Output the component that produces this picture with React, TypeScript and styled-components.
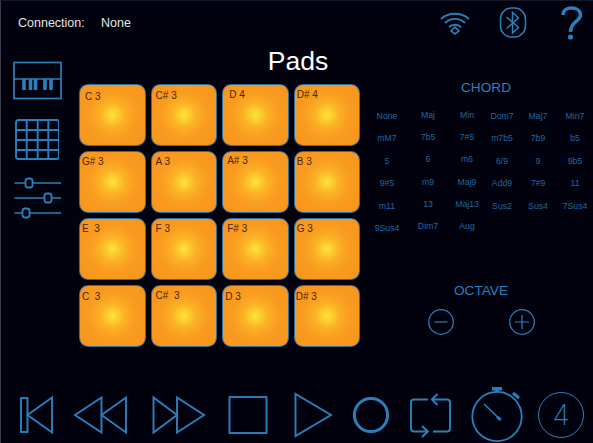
import React from 'react';
import styled, {createGlobalStyle} from 'styled-components';

const blue = '#2b80bb';
const dimBlue = '#1f689c';

const GlobalStyle = createGlobalStyle`
  html, body {
    margin: 0;
    padding: 0;
    background: #02020f;
  }
`

const Screen = styled.div`
  width: 593px;
  height: 443px;
  box-sizing: border-box;
  overflow: hidden;
  display: flex;
  flex-direction: column;
  background: #02020f;
  border-left: 1px solid #3a3a48;
  border-top: 1px solid #14142a;
  font-family: "Liberation Sans", Arial, sans-serif;
`

const TopBar = styled.header`
  height: 43px;
  flex: 0 0 auto;
  display: flex;
  align-items: center;
  padding: 0 9px 0 17px;
`

const ConnectionLabel = styled.span`
  font-size: 12.5px;
  color: #e4e4e8;
  width: 83px;
`

const ConnectionValue = styled.span`
  font-size: 12.5px;
  color: #e4e4e8;
  flex: 1;
`

const StatusIcon = styled.svg<{$gap: number}>`
  display: block;
  flex: 0 0 auto;
  margin-left: ${({$gap}) => $gap}px;
`

const Main = styled.main`
  flex: 1;
  display: flex;
  min-height: 0;
`

const Sidebar = styled.nav`
  width: 78px;
  flex: 0 0 auto;
  display: flex;
  flex-direction: column;
  align-items: flex-start;
  padding: 17px 0 0 12px;
  box-sizing: border-box;
`

const SideIcon = styled.svg<{$after: number}>`
  display: block;
  margin-bottom: ${({$after}) => $after}px;
`

const PadSection = styled.section`
  width: 288px;
  flex: 0 0 auto;
  display: flex;
  flex-direction: column;
`

const Title = styled.h1`
  margin: 0;
  height: 40px;
  font-size: 26.5px;
  line-height: 34px;
  font-weight: 400;
  color: #fff;
  text-align: center;
  padding-left: 149px;
  white-space: nowrap;
  width: 140px;
`

const PadGrid = styled.div`
  display: grid;
  grid-template-columns: repeat(4, 66.6px);
  grid-template-rows: repeat(4, 62px);
  column-gap: 5px;
  row-gap: 5px;
`

const Pad = styled.button<{$x: number; $y: number}>`
  box-sizing: border-box;
  margin: 0;
  padding: ${({$x, $y}) => `${$y}px 0 0 ${$x}px`};
  border: 1px solid #2f6f9f;
  border-radius: 9px;
  background: radial-gradient(circle at 50% 50%, #fbe43a 0%, #fcd030 11%, #fbb126 28%, #f99c20 52%, #f7941e 100%);
  color: #45290a;
  font-family: inherit;
  font-size: 10px;
  line-height: 12px;
  text-align: left;
  white-space: pre;
  display: flex;
  align-items: flex-start;
`

const ControlPanel = styled.aside`
  flex: 1;
  display: flex;
  flex-direction: column;
  padding-top: 36px;
`

const PanelHeading = styled.h2<{$width: number}>`
  margin: 0;
  font-size: 13.7px;
  line-height: 16px;
  font-weight: 400;
  color: ${blue};
  text-align: center;
  width: ${({$width}) => $width}px;
`

const ChordGrid = styled.div`
  display: grid;
  grid-template-columns: 40px 42px 36px 34px 38px 36px;
  grid-auto-rows: 22.4px;
  margin: 14px 0 39px;
`

const ChordCell = styled.span<{$lifted: boolean}>`
  font-size: 8.7px;
  line-height: 12px;
  text-align: center;
  color: ${dimBlue};
  white-space: nowrap;
  margin-top: ${({$lifted}) => $lifted ? -1.5 : 0}px;
`

const OctaveRow = styled.div`
  display: flex;
  justify-content: center;
  gap: 53px;
  width: 228px;
  margin-top: 9px;
`

const Transport = styled.footer`
  height: 56px;
  flex: 0 0 auto;
  display: flex;
  align-items: center;
  padding-left: 18px;
`

const TransportIcon = styled.svg<{$gap: number}>`
  display: block;
  flex: 0 0 auto;
  margin-left: ${({$gap}) => $gap}px;
`

const CountBadge = styled.div`
  box-sizing: border-box;
  flex: 0 0 auto;
  width: 46px;
  height: 46px;
  margin-left: 14px;
  border: 1.8px solid ${blue};
  border-radius: 50%;
  display: flex;
  align-items: center;
  justify-content: center;
  color: ${blue};
  font-family: Inter, "Liberation Sans", sans-serif;
  font-size: 28px;
  font-weight: 200;
  line-height: 1;
`

const padRows: [string, number, number][][] = [
  [['C 3', 5, 6], ['C# 3', 4, 5], ['D 4', 6, 4], ['D# 4', 2, 4]],
  [['G# 3', 2, 4], ['A 3', 4, 4], ['A# 3', 4, 3], ['B 3', 2, 4]],
  [['E  3', 2, 4], ['F 3', 4, 4], ['F# 3', 4, 4], ['G 3', 2, 4]],
  [['C  3', 2, 5], ['C#  3', 4, 4], ['D 3', 2, 5], ['D# 3', 1, 5]]
];

const chords = [
  'None', 'Maj', 'Min', 'Dom7', 'Maj7', 'Min7',
  'mM7', '7b5', '7#5', 'm7b5', '7b9', 'b5',
  '5', '6', 'm6', '6/9', '9', '9b5',
  '9#5', 'm9', 'Maj9', 'Add9', '7#9', '11',
  'm11', '13', 'Maj13', 'Sus2', 'Sus4', '7Sus4',
  '9Sus4', 'Dim7', 'Aug'
];

const PianoIcon = () => <SideIcon $after={19} width="50" height="39" viewBox="0 0 50 39" fill="none" stroke={blue}>
  <rect x="1" y="1.5" width="47" height="36" strokeWidth="1.7"/>
  <path d="M1 18H48" strokeWidth="1.7"/>
  <path d="M11 18V29M17.500 18V29M22.500 18V29M32 18V29M38 18V29" strokeWidth="3.6"/>
</SideIcon>

const GridIcon = () => <SideIcon $after={16} width="46" height="42" viewBox="0 0 46 42" fill="none" stroke={blue} strokeWidth="1.900">
  <rect x="3" y="1" width="43" height="39" rx="2.500"/>
  <path d="M13.700 1V40M24.700 1V40M35.300 1V40M3 11H46M3 21H46M3 31H46"/>
</SideIcon>

const SlidersIcon = () => <SideIcon $after={0} width="50" height="42" viewBox="0 0 50 42" fill="none" stroke={blue} strokeWidth="1.3">
  <path d="M1.500 6H12.500M19.500 6H48M1.500 21H31.500M38.500 21H48M1.500 36H9.500M16.500 36H48"/>
  <rect x="12.500" y="1.500" width="7" height="9" rx="2.500" strokeWidth="1.800"/>
  <rect x="31.500" y="16.500" width="7" height="9" rx="2.500" strokeWidth="1.800"/>
  <rect x="9.500" y="31.500" width="7" height="9" rx="2.500" strokeWidth="1.800"/>
</SideIcon>

const RoundButton = ({plus}: {plus?: boolean}) => <svg width="28" height="28" viewBox="0 0 28 28" fill="none" stroke={blue} strokeWidth="1.200">
  <circle cx="14" cy="14" r="12.300"/>
  <path d={plus ? 'M7 14H21M14 7V21' : 'M7.500 14H20.500'}/>
</svg>

const App = () => <>
  <GlobalStyle/>
  <Screen>
    <TopBar>
      <ConnectionLabel>Connection:</ConnectionLabel>
      <ConnectionValue>None</ConnectionValue>
      <StatusIcon $gap={0} width="32" height="24" viewBox="0 0 32 24" fill="none" stroke={blue} strokeWidth="1.900">
        <path d="M2 8C9.500 1 22.500 1 30 8"/>
        <path d="M6 12C11.500 6.500 20.500 6.500 26 12"/>
        <path d="M10 16C13 13 19 13 22 16"/>
        <path d="M16 16L20 20L16 23L12 20Z" strokeWidth="1.600"/>
      </StatusIcon>
      <StatusIcon $gap={28} width="28" height="32" viewBox="0 0 28 32" fill="none" stroke={blue} strokeWidth="1.500">
        <rect x="1.500" y="1" width="25" height="29" rx="11"/>
        <path d="M7.500 10L19.500 20.500L13.500 26V5.500L19.500 11L7.500 21.500"/>
      </StatusIcon>
      <StatusIcon $gap={33} width="24" height="36" viewBox="0 0 24 36" fill="none" stroke={blue} strokeWidth="3.500">
        <path d="M3 10C3 5 7 3 11.500 3C17 3 20.500 6 20.500 10C20.500 16.500 10.500 16 10.500 27"/>
        <circle cx="10.500" cy="32" r="2.600" fill={blue} stroke="none"/>
      </StatusIcon>
    </TopBar>
    <Main>
      <Sidebar>
        <PianoIcon/>
        <GridIcon/>
        <SlidersIcon/>
      </Sidebar>
      <PadSection>
        <Title>Pads</Title>
        <PadGrid>
          {padRows.flat().map(([label, x, y], i) => <Pad key={i} $x={x} $y={y}>{label}</Pad>)}
        </PadGrid>
      </PadSection>
      <ControlPanel>
        <PanelHeading $width={238}>CHORD</PanelHeading>
        <ChordGrid>
          {chords.map((chord, i) => <ChordCell key={chord} $lifted={i % 6 === 1 || i % 6 === 2}>{chord}</ChordCell>)}
        </ChordGrid>
        <PanelHeading $width={228}>OCTAVE</PanelHeading>
        <OctaveRow>
          <RoundButton/>
          <RoundButton plus/>
        </OctaveRow>
      </ControlPanel>
    </Main>
    <Transport>
      <TransportIcon $gap={0} width="35" height="40" viewBox="0 0 35 40" fill="none" stroke={blue} strokeWidth="1.900">
        <rect x="2" y="3" width="6.500" height="34"/>
        <path d="M33 2.500V37.500L8.500 20Z"/>
      </TransportIcon>
      <TransportIcon $gap={19} width="55" height="40" viewBox="0 0 55 40" fill="none" stroke={blue} strokeWidth="1.900">
        <path d="M28.500 2.500V37.500L2 20Z"/>
        <path d="M53 2.500V37.500L28.500 20Z"/>
      </TransportIcon>
      <TransportIcon $gap={23} width="55" height="40" viewBox="0 0 55 40" fill="none" stroke={blue} strokeWidth="1.900">
        <path d="M2.500 2.500V37.500L26 20Z"/>
        <path d="M26 2.500V37.500L53 20Z"/>
      </TransportIcon>
      <TransportIcon $gap={22} width="40" height="40" viewBox="0 0 40 40" fill="none" stroke={blue} strokeWidth="1.900">
        <rect x="1.500" y="2" width="37" height="36"/>
      </TransportIcon>
      <TransportIcon $gap={26} width="39" height="46" viewBox="0 0 39 46" fill="none" stroke={blue} strokeWidth="1.900">
        <path d="M1.500 2V44L37 23Z"/>
      </TransportIcon>
      <TransportIcon $gap={19} width="38" height="38" viewBox="0 0 38 38" fill="none" stroke={blue} strokeWidth="3">
        <circle cx="19" cy="19" r="16.600"/>
      </TransportIcon>
      <TransportIcon $gap={19} width="44" height="46" viewBox="0 0 44 46" fill="none" stroke={blue} strokeWidth="1.900">
        <path d="M19 7.500H5A3 3 0 0 0 2 10.500V36.500A3 3 0 0 0 5 39.500H19M13 34L19 39.500L13 45"/>
        <path d="M24 39.500H38A3 3 0 0 0 41 36.500V10.500A3 3 0 0 0 38 7.500H23M28.500 2L23 7.500L28.500 13"/>
      </TransportIcon>
      <TransportIcon $gap={18} width="53" height="56" viewBox="0 0 53 56" fill="none" stroke={blue}>
        <circle cx="26" cy="29.500" r="24.700" strokeWidth="1.800"/>
        <path d="M21 1.800H31" strokeWidth="3.500"/>
        <path d="M26 3V5" strokeWidth="4"/>
        <path d="M42 6L48 11" strokeWidth="3"/>
        <path d="M13 17L29.700 33" strokeWidth="1.500"/>
        <path d="M26 29.700L29.700 33" strokeWidth="2.800"/>
      </TransportIcon>
      <CountBadge>4</CountBadge>
    </Transport>
  </Screen>
</>

export default App;
